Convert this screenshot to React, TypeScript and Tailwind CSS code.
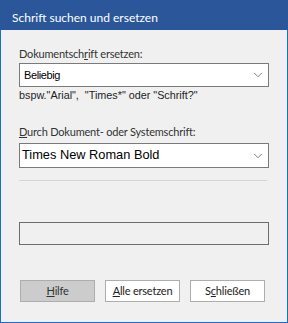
import { ChevronDown } from "lucide-react";

const ui = { fontFamily: 'Lato, "Noto Sans", sans-serif' };
const arial = { fontFamily: '"Liberation Sans", Arial, sans-serif' };

function Combo({ value, big }: { value: string; big?: boolean }) {
  return (
    <div
      className={
        big
          ? "flex h-[25px] items-center justify-between border border-[#7a7a7a] bg-white pl-[2px] pr-[3px]"
          : "flex h-[24px] items-center justify-between border border-[#7a7a7a] bg-white pl-[4px] pr-[3px]"
      }
    >
      <span
        style={arial}
        className={
          big
            ? "text-[12.8px] leading-none text-black"
            : "text-[11px] leading-none tracking-[-0.4px] text-black"
        }
      >
        {value}
      </span>
      <ChevronDown size={14} strokeWidth={1.3} className="text-[#555]" />
    </div>
  );
}

function Button({ children, primary }: { children: React.ReactNode; primary?: boolean }) {
  return (
    <button
      style={ui}
      className={
        primary
          ? "flex h-[22px] w-[75px] items-center justify-center border border-[#adadad] bg-[#cccccc] text-[11px] tracking-[-0.2px] text-[#333]"
          : "flex h-[22px] w-[75px] items-center justify-center border border-[#adadad] bg-white text-[11px] tracking-[-0.2px] text-[#222]"
      }
    >
      {children}
    </button>
  );
}

export default function App() {
  return (
    <div className="flex h-[323px] w-[288px] flex-col border-x border-b border-[#1a6fd6] bg-[#f0f0f0]">
      <div
        style={ui}
        className="-mx-px flex h-[30px] items-center bg-[#2b579a] pl-[12px] pt-[5px] text-[12px] text-white"
      >
        Schrift suchen und ersetzen
      </div>

      <div className="flex flex-1 flex-col px-[18px] pt-[16px]">
        <label style={ui} className="text-[11px] leading-[16px] tracking-[-0.2px] text-[#333]">
          Dokumentsch<span className="underline">r</span>ift ersetzen:
        </label>
        <div className="mt-px">
          <Combo value="Beliebig" />
        </div>
        <p style={arial} className="text-[10.8px] leading-[16px] text-[#1e1e1e]">
          bspw.&quot;Arial&quot;, &nbsp;&quot;Times*&quot; oder &quot;Schrift?&quot;
        </p>

        <label style={ui} className="mt-[21px] text-[11px] leading-[16px] tracking-[-0.2px] text-[#333]">
          <span className="underline">D</span>urch Dokument- oder Systemschrift:
        </label>
        <div className="mt-[3px]">
          <Combo value="Times New Roman Bold" big />
        </div>

        <div className="mt-[12px] mr-[2px] h-px bg-[#d5d5d5]" />

        <div className="mt-[41px] h-[23px] border border-[#6d6d6d]" />

        <div className="mt-[35px] flex gap-[10px] pl-px">
          <Button primary>
            <span className="underline">H</span>ilfe
          </Button>
          <Button>
            <span className="underline">A</span>lle ersetzen
          </Button>
          <Button>
            S<span className="underline">c</span>hließen
          </Button>
        </div>
      </div>
    </div>
  );
}
